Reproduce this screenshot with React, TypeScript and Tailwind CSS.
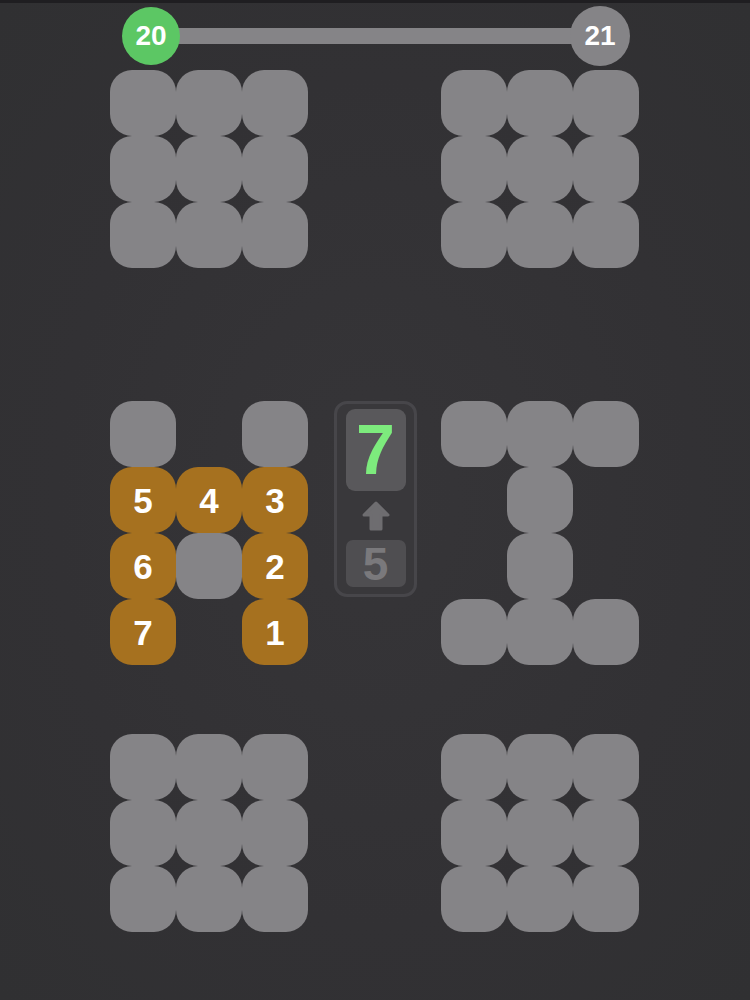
import clsx from 'clsx';

type Cell = null | { kind: 'gray' } | { kind: 'num'; value: number };

const g: Cell = { kind: 'gray' };
const n = (value: number): Cell => ({ kind: 'num', value });

const full: Cell[][] = [
  [g, g, g],
  [g, g, g],
  [g, g, g],
];

const letterH: Cell[][] = [
  [g, null, g],
  [n(5), n(4), n(3)],
  [n(6), g, n(2)],
  [n(7), null, n(1)],
];

const letterI: Cell[][] = [
  [g, g, g],
  [null, g, null],
  [null, g, null],
  [g, g, g],
];

const font = { fontFamily: '"Liberation Sans", Arial, sans-serif' };

function Block({ rows }: { rows: Cell[][] }) {
  return (
    <div className="grid grid-cols-[repeat(3,66px)] auto-rows-[66px]">
      {rows.flat().map((cell, i) => (
        <div
          key={i}
          className={clsx(
            'flex items-center justify-center rounded-[22px]',
            cell?.kind === 'gray' && 'bg-[#858487]',
            cell?.kind === 'num' && 'bg-[#a6711f]',
          )}
        >
          {cell?.kind === 'num' && (
            <span className="text-[35px] font-bold leading-none text-white">{cell.value}</span>
          )}
        </div>
      ))}
    </div>
  );
}

function Indicator() {
  return (
    <div className="flex h-[196px] w-[83px] flex-col items-center rounded-[13px] border-[3px] border-[#47464a] bg-[#39383b] pt-[5px]">
      <div className="flex h-[82px] w-[60px] items-center justify-center rounded-[9px] bg-[#59585b]">
        <span className="text-[70px] font-bold leading-none text-[#7deb7d]">7</span>
      </div>
      <svg width="34" height="34" viewBox="0 0 34 34" className="mt-[8px]">
        <path d="M17 4 L29 16 L22 16 L22 30 L12 30 L12 16 L5 16 Z" fill="#6e6d70" strokeLinejoin="round" stroke="#6e6d70" strokeWidth="3" />
      </svg>
      <div className="mt-[7px] flex h-[47px] w-[60px] items-center justify-center rounded-[7px] bg-[#4f4e51]">
        <span className="text-[46px] font-bold leading-none text-[#7a797c]">5</span>
      </div>
    </div>
  );
}

export default function App() {
  return (
    <div
      className="relative h-[1000px] w-[750px] overflow-hidden border-t-[3px] border-[#1f1e21] bg-[#323134] bg-[radial-gradient(ellipse_at_50%_50%,#363538_0%,#323134_60%,#303032_100%)]"
      style={font}
    >
      <div className="flex h-[65px] items-center pl-[122px] pr-[120px]">
        <div className="z-10 flex h-[58px] w-[58px] shrink-0 items-center justify-center rounded-full bg-[#5cc764]">
          <span className="text-[28px] font-bold leading-none text-white">20</span>
        </div>
        <div className="-mx-[4px] h-[16px] flex-1 bg-[#858487]" />
        <div className="z-10 flex h-[60px] w-[60px] shrink-0 items-center justify-center rounded-full bg-[#858487]">
          <span className="text-[28px] font-bold leading-none text-white">21</span>
        </div>
      </div>

      <div className="flex flex-col pl-[110px] pt-[2px]">
        <div className="flex gap-[133px]">
          <Block rows={full} />
          <Block rows={full} />
        </div>

        <div className="mt-[133px] flex items-start">
          <Block rows={letterH} />
          <div className="ml-[26px] mr-[24px]">
            <Indicator />
          </div>
          <Block rows={letterI} />
        </div>

        <div className="mt-[69px] flex gap-[133px]">
          <Block rows={full} />
          <Block rows={full} />
        </div>
      </div>
    </div>
  );
}
